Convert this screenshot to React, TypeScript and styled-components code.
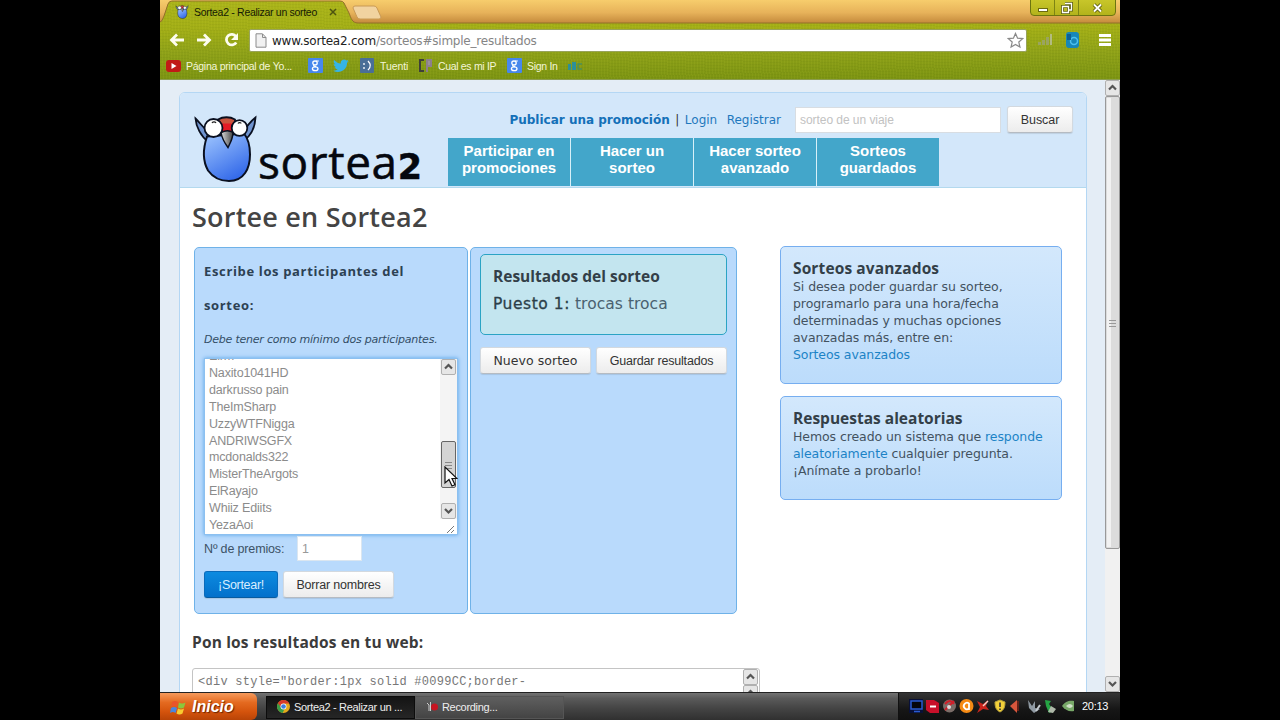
import React from 'react';
import styled, { createGlobalStyle, css } from 'styled-components';

const Global = createGlobalStyle`
  * { box-sizing: border-box; }
  html, body { margin: 0; background: #000; overflow: hidden; }
`;

const sans = '"Liberation Sans", Arial, sans-serif';
const verdana = '"DejaVu Sans", Verdana, sans-serif';
const treb = '"Open Sans", "Trebuchet MS", sans-serif';

const Stage = styled.div`
  width: 1280px; height: 720px; background: #000; display: flex; justify-content: center; overflow: hidden;
`;
const Screen = styled.div`
  width: 960px; height: 720px; display: flex; flex-direction: column; position: relative; white-space: nowrap;
`;

/* ---------- browser chrome ---------- */
const Chrome = styled.div`
  height: 80px; flex: none; display: flex; flex-direction: column;
  border-bottom: 1px solid #8b9d50;
  background:
    repeating-linear-gradient(87deg, rgba(255,255,90,.05) 0 1px, transparent 1px 3px),
    repeating-linear-gradient(3deg, rgba(50,70,0,.05) 0 1px, transparent 1px 3px),
    linear-gradient(#abb41a 0, #a2ae16 28px, #8ea118 52px, #7c9412 78px);
`;
const TabStrip = styled.div`
  height: 25px; display: flex; align-items: flex-start; position: relative;
`;
const StripArt = styled.svg` position: absolute; left: 0; top: 0; `;
const Tab = styled.div`
  position: relative; display: flex; align-items: center; height: 24px; padding-left: 15px; width: 190px;
  font: 10.5px ${sans}; color: #151a04;
`;
const TabTitle = styled.span` width: 124px; margin-left: 5px; letter-spacing: -0.3px; `;
const TabClose = styled.svg` margin-left: 11px; `;
const WinButtons = styled.div`
  position: absolute; right: 4px; top: -2px; display: flex; height: 18px; width: 86px;
  border: 1px solid #6d7410; border-radius: 0 0 4px 4px; background: linear-gradient(#c9c72b, #b3b31b);
`;
const WinButton = styled.div<{ $w: number }>`
  width: ${p => p.$w}px; display: flex; align-items: center; justify-content: center; padding-top: 1px;
  & + & { border-left: 1px solid #7d8414; }
`;
const Toolbar = styled.div`
  height: 30px; display: flex; align-items: center; padding: 0 8px 0 8px; 
`;
const NavIcons = styled.svg` width: 80px; height: 24px; flex: none; `;
const Address = styled.div`
  width: 779px; height: 23px; margin-left: 1px; background: #fff; border: 1px solid #98a35a; border-radius: 2px;
  display: flex; align-items: center; padding: 0 2px 0 5px; font: 13px ${verdana}; color: #222;
  em { font-style: normal; color: #858585; }
`;
const Url = styled.span` flex: 1; margin: 1px 0 0 5px; font-size: 12px; letter-spacing: -0.22px; `;
const ToolIcons = styled.svg` margin-left: 9px; flex: none; `;
const Bookmarks = styled.div`
  height: 24px; padding: 2px 0 0 6px; display: flex; align-items: flex-start;
  font: 10.5px ${sans}; color: #f4f6d8; 
`;
const Bookmark = styled.div<{ $w: number; $ls?: number }>`
  width: ${p => p.$w}px; display: flex; align-items: center; gap: 5px; height: 17px; flex: none;
  letter-spacing: ${p => p.$ls ?? 0}px;
`;

/* ---------- page ---------- */
const Viewport = styled.div`
  height: 612px; flex: none; display: flex; background: #e4edf6; overflow: hidden;
`;
const PageArea = styled.div` width: 945px; padding: 12px 19px 0 19px; `;
const Sheet = styled.div`
  width: 908px; height: 640px; border: 1px solid #b4d7f4; border-radius: 6px 6px 0 0; background: #fff; overflow: hidden;
`;
const Header = styled.div`
  height: 95px; background: #d3e7fa; border-bottom: 1px solid #b3d9ee; display: flex; padding: 0 13px 0 14px;
`;
const Logo = styled.div` width: 254px; display: flex; padding-top: 21px; `;
const Wordmark = styled.div`
  font: 46px/50px ${treb}; color: #05080f; margin: 22px 0 0 1px; letter-spacing: 0.6px; display: flex; align-items: baseline;
  -webkit-text-stroke: 0.5px #05080f;
  b { font: bold 35px/40px ${verdana}; letter-spacing: 0; }
`;
const HeaderRight = styled.div` flex: 1; display: flex; flex-direction: column; `;
const TopLinks = styled.div`
  height: 45px; display: flex; align-items: flex-end; justify-content: flex-end; padding-bottom: 5px; color: #1f78bd;
  font: 12px/26px ${verdana};
  b { color: #1470b8; }
`;
const Bar = styled.span` color: #333; margin: 0 5.5px 0 5.5px; `;
const RegisterLink = styled.span` margin-left: 9.5px; `;
const control = css` background: #fff; border: 1px solid #d8dde2; `;
const Search = styled.div`
  ${control} width: 206px; height: 26px; margin: 0 6px 0 14px; padding-left: 4px; font: 12px/24px ${sans}; color: #c2c2c2;
  letter-spacing: -0.05px;
`;
const Button = styled.div<{ $w: number; $ls?: number; $primary?: boolean; $font?: string }>`
  width: ${p => p.$w}px; height: 27px; flex: none; text-align: center; border-radius: 3px;
  font: 12.5px/26px ${p => p.$font ?? sans}; letter-spacing: ${p => p.$ls ?? -0.2}px;
  color: ${p => (p.$primary ? '#d8eeff' : '#333')};
  border: 1px solid ${p => (p.$primary ? '#0a6bbb' : '#d3d9df')};
  border-bottom-color: ${p => (p.$primary ? '#075b9f' : '#b5bbc2')};
  background: ${p => (p.$primary ? 'linear-gradient(#0c8be0, #0370cb)' : 'linear-gradient(#fff, #ececec)')};
  box-shadow: 0 1px 1px rgba(0,0,0,.1);
`;
const Menu = styled.div` display: flex; gap: 1px; background: #d8f0f8; width: 491px; `;
const MenuItem = styled.div`
  width: 122px; height: 48px; background: #43a6ca; color: #fff; text-align: center; padding-top: 4px;
  font: bold 15px/17px ${sans};
`;
const Title = styled.h1`
  font: 600 27px/36px ${treb}; color: #444; margin: 0; padding: 11px 0 0 12px; letter-spacing: 0.22px;
`;
const Columns = styled.div` display: flex; padding: 11px 0 0 14px; align-items: flex-start; `;
const Panel = styled.div<{ $w: number }>`
  width: ${p => p.$w}px; height: 367px; border: 1px solid #6fb2e8; border-radius: 5px; background: #b9dafc;
  padding: 6px 9px 0; margin: 1px 2px 0 0; color: #2b4358;
`;
const FormHead = styled.div` font: bold 13px/34px ${treb}; letter-spacing: 0.65px; color: #2d4153; `;
const Hint = styled.div` font: italic 11px/34px ${verdana}; letter-spacing: -0.22px; color: #334e66; padding-top: 1px; `;
const TextArea = styled.div`
  height: 177px; width: 254px; margin-top: 1px; background: #fff; border: 1px solid #8cc0f0; box-shadow: 0 0 4px #5aa5e8;
  display: flex; justify-content: space-between; overflow: hidden;
`;
const Names = styled.div`
  padding-left: 4px; margin-top: -11px; font: 12.5px/16.9px ${sans}; letter-spacing: -0.17px; color: #8b8b8b;
`;
const AreaScroll = styled.svg` flex: none; `;
const PrizeRow = styled.div`
  display: flex; font: 12.5px/26px ${sans}; letter-spacing: -0.15px; color: #3c5266; margin-top: 1px;
`;
const PrizeLabel = styled.span` width: 93px; `;
const PrizeInput = styled.div`
  width: 65px; height: 25px; background: #fff; border: 1px solid #dbe6f0; padding-left: 4px; line-height: 24px; color: #999;
`;
const Row = styled.div<{ $mt: number; $gap: number }>` display: flex; margin-top: ${p => p.$mt}px; gap: ${p => p.$gap}px; `;
const Result = styled.div`
  height: 81px; width: 247px; border: 1px solid #2ba3c4; border-radius: 5px; background: #c3e5ef; padding: 8px 12px;
`;
const BoxTitle = styled.div<{ $ls?: number }>`
  font: bold 15.5px/26px ${treb}; color: #333f48; letter-spacing: ${p => p.$ls ?? 0}px;
`;
const Place = styled.div`
  font: 15.5px/28px ${verdana}; color: #4a6170; margin-top: 1px; letter-spacing: 0.04px;
  span { color: #2c3f4a; letter-spacing: 0.55px; -webkit-text-stroke: 0.3px #2c3f4a; }
`;
const Side = styled.div` margin-left: 41px; display: flex; flex-direction: column; gap: 12px; `;
const SideBox = styled.div<{ $h: number }>`
  width: 282px; height: ${p => p.$h}px; border: 1px solid #76aef0; border-radius: 5px;
  background: linear-gradient(#d3e8fc, #bcdcfb); padding: 11px 12px; color: #43525f; 
  font: 12.5px/16.9px ${verdana}; letter-spacing: -0.08px;
  a { color: #1c83c6; }
`;
const SideTitle = styled(BoxTitle)` line-height: 21px; `;
const WebHead = styled.div`
  font: bold 15.5px/24px ${treb}; color: #3b3b3b; padding: 16px 0 0 12px; letter-spacing: 0.16px;
`;
const CodeBox = styled.div`
  margin: 14px 0 0 12px; width: 568px; height: 60px; border: 1px solid #c4c4c4; border-radius: 3px; display: flex;
  justify-content: space-between; font: 12px/26px "Liberation Mono", monospace; letter-spacing: 0.26px; color: #777;
  padding-left: 5px;
`;
const PageScroll = styled.svg` flex: none; `;

/* ---------- taskbar ---------- */
const Taskbar = styled.div`
  height: 28px; display: flex; border-top: 1px solid #222;
  background: linear-gradient(#727272, #5a5a5a 20%, #454545 55%, #303030);
  color: #fff; font: 11px/26px ${sans};
`;
const Start = styled.div`
  width: 97px; display: flex; align-items: center; padding-left: 10px; gap: 5px; border-radius: 0 6px 6px 0;
  background: linear-gradient(#f59a5c, #e46a20 35%, #d4530c 70%, #b84407);
  font: italic bold 16px/26px ${sans}; text-shadow: 1px 1px 1px #6b2500; margin-right: 9px;
`;
const Task = styled.div<{ $active?: boolean; $w: number }>`
  width: ${p => p.$w}px; margin: 3px 0 1px; display: flex; align-items: center; gap: 4px; padding: 0 0 2px 10px;
  line-height: 20px; color: #eee; letter-spacing: -0.32px;
  background: ${p => (p.$active ? 'linear-gradient(#141414, #262626)' : 'linear-gradient(#5f5f5f, #444)')};
  border: 1px solid ${p => (p.$active ? '#0c0c0c' : '#555')};
`;
const Tray = styled.div`
  margin-left: auto; width: 222px; background: linear-gradient(#343434, #161616 60%, #101010);
  border-left: 1px solid #111; display: flex; align-items: center; padding: 0 0 1px 10px; gap: 5px; letter-spacing: -0.3px;
`;
const Cursor = styled.svg` position: absolute; left: 284px; top: 466px; `;

const Bird = ({ w, h }: { w: number; h: number }) => (
  <svg width={w} height={h} viewBox="0 0 63 69">
    <defs>
      <linearGradient id="body" x1="0.2" y1="0.1" x2="0.7" y2="1">
        <stop offset="0" stopColor="#8fb8fb" /><stop offset="1" stopColor="#2f66e8" />
      </linearGradient>
      <linearGradient id="beak"><stop offset="0" stopColor="#ddd" /><stop offset="1" stopColor="#444" /></linearGradient>
    </defs>
    <path d="M14 27C7 22 2 12 1.500 4c4 4 8 9 13 14zM50 26c7-5 11-14 11.500-23-5 4-9 9-12 15z" fill="#6f93cf" stroke="#0a1020" strokeWidth="1.800" />
    <path d="M13 22C9 34 9 47 14 56C19 63 26 66.500 35 66.500C50 66.500 56 54 56 40C56 32 54 24 50 19z" fill="url(#body)" stroke="#0a1020" strokeWidth="2" />
    <path d="M24 5c5-3 12-3 17 0v14H25z" fill="#c9553f" stroke="#0a1020" strokeWidth="1.800" />
    <path d="M28 9h11v8H28z" fill="#e31a26" />
    <path d="M27 18c4-2 9-2 12 0 0 6-3 11-5 15-3-4-6-9-7-15z" fill="url(#beak)" stroke="#0a1020" strokeWidth="1.500" />
    <circle cx="19.500" cy="13.500" r="9" fill="#fff" stroke="#0a1020" strokeWidth="1.800" />
    <circle cx="45.500" cy="13.500" r="7.800" fill="#fff" stroke="#0a1020" strokeWidth="1.800" />
    <path d="M18 8.500c1-1.500 3-1.500 4 0M44 9c1-1.500 3-1 3 0" fill="none" stroke="#222" strokeWidth="1.300" />
  </svg>
);

const GoogleG = () => (
  <svg width="15" height="15" viewBox="0 0 15 15">
    <rect width="15" height="15" rx="1" fill="#4787ec" />
    <ellipse cx="7" cy="5" rx="2.200" ry="2" fill="none" stroke="#fff" strokeWidth="1.300" />
    <path d="M8 3h2.800M6 7C5 8 6.500 8.300 8 8.800" fill="none" stroke="#fff" strokeWidth="1.200" />
    <ellipse cx="7.200" cy="10.700" rx="2.800" ry="1.900" fill="none" stroke="#fff" strokeWidth="1.300" />
  </svg>
);

const ScrollButton = ({ x, y, down, h = 15 }: { x: number; y: number; down?: boolean; h?: number }) => (
  <g transform={`translate(${x} ${y})`}>
    <rect x=".5" y=".5" width="14" height={h} rx="1.500" fill="#e6e6e6" stroke="#b0b0b0" />
    <path d={down ? 'M4 6l3.500 3.500L11 6' : 'M4 9.500L7.500 6 11 9.500'} fill="none" stroke="#555" strokeWidth="2.200" />
  </g>
);

const names = ['Elrm', 'Naxito1041HD', 'darkrusso pain', 'TheImSharp', 'UzzyWTFNigga', 'ANDRIWSGFX', 'mcdonalds322',
  'MisterTheArgots', 'ElRayajo', 'Whiiz Ediits', 'YezaAoi'];

export default function App() {
  return (
    <Stage>
      <Global />
      <Screen>
        <Chrome>
          <TabStrip>
            <StripArt width="960" height="25">
              <defs>
                <linearGradient id="gold" x1="0" y1="0" x2="0" y2="1">
                  <stop offset="0" stopColor="#f7cd6c" /><stop offset=".55" stopColor="#e7b25a" /><stop offset="1" stopColor="#c48a3c" />
                </linearGradient>
              </defs>
              <path d="M0 0H960V23H198C192 23 191 18 189 13L184 3Q183 1 180 1H12Q9 1 8 4L4 16Q2 22 0 22z" fill="url(#gold)" />
              <path d="M960 23H198C192 23 191 18 189 13L184 3Q183 1 180 1H12Q9 1 8 4L4 16Q2 22 0 22" fill="none" stroke="#94702a" />
              <path d="M195 6h19q2 0 3 2l4 9q0 2-2 2h-19q-2 0-3-2l-4-9q0-2 2-2z" fill="#f1d3a0" stroke="#c99a55" />
            </StripArt>
            <Tab>
              <Bird w={14} h={14} />
              <TabTitle>Sortea2 - Realizar un sorteo</TabTitle>
              <TabClose width="8" height="8"><path d="M1 1l6 6M7 1L1 7" stroke="#4d5310" strokeWidth="1.500" /></TabClose>
            </Tab>
            <WinButtons>
              <WinButton $w={23}><svg width="12" height="10"><rect x="1.500" y="5.500" width="9" height="3" fill="#fff" stroke="#6b6b10" /></svg></WinButton>
              <WinButton $w={24}>
                <svg width="12" height="12"><path d="M4 1.500h6.500V8H8M1.500 4.500h6v6h-6z" fill="none" stroke="#5f6010" strokeWidth="3" /><path d="M4 1.500h6.500V8H8M1.500 4.500h6v6h-6z" fill="none" stroke="#fff" strokeWidth="1.300" /></svg>
              </WinButton>
              <WinButton $w={37}>
                <svg width="11" height="10"><path d="M2 1.500l7 7M9 1.500l-7 7" stroke="#5f6010" strokeWidth="3.800" /><path d="M2 1.500l7 7M9 1.500l-7 7" stroke="#fff" strokeWidth="1.800" /></svg>
              </WinButton>
            </WinButtons>
          </TabStrip>
          <Toolbar>
            <NavIcons viewBox="0 0 80 24">
              <g fill="none" stroke="#fdfdf0" strokeWidth="2.800">
                <path d="M16 12H4M9 6.500L3.500 12 9 17.500" />
                <path d="M29 12h12M36 6.500L41.500 12 36 17.500" />
                <path d="M68 8.500A5.300 5.300 0 1 0 68.200 14.500" />
              </g>
              <path d="M70 5v7h-7z" fill="#fdfdf0" />
            </NavIcons>
            <Address>
              <svg width="12" height="15"><path d="M1 .8h6.500L11 4.500v9.700H1z" fill="#f1f1f1" stroke="#8c8c8c" /><path d="M7.500 1v3.500H11" fill="none" stroke="#8c8c8c" /></svg>
              <Url>www.sortea2.com<em>/sorteos#simple_resultados</em></Url>
              <svg width="17" height="17" viewBox="0 0 18 18"><path d="M9 1.500l2.200 5 5.400.5-4.100 3.600 1.200 5.400L9 13.200 4.300 16l1.200-5.400L1.400 7l5.400-.5z" fill="#fff" stroke="#8a8a8a" strokeWidth="1.300" /></svg>
            </Address>
            <ToolIcons width="76" height="20">
              <path d="M2 15v-3h3v3zM6 15v-5h3v5zM10 15V7h3v8z" fill="#9aa460" /><path d="M14 15V4h2v11z" fill="#b3bb80" />
              <rect x="30" y="2" width="13" height="16" rx="3" fill="#1787b8" /><circle cx="38" cy="11" r="3.500" fill="none" stroke="#4cc0ee" strokeWidth="1.500" /><path d="M31 4h4v6h-4z" fill="#0d5f93" />
              <path d="M63 5.500h12M63 10h12M63 14.500h12" stroke="#fff" strokeWidth="2.800" />
            </ToolIcons>
          </Toolbar>
          <Bookmarks>
            <Bookmark $w={142} $ls={-0.27}>
              <svg width="15" height="12"><rect width="15" height="12" rx="3" fill="#c11a16" /><path d="M5.500 3l5 3-5 3z" fill="#fff" /></svg>
              Página principal de Yo...
            </Bookmark>
            <Bookmark $w={25}><GoogleG /></Bookmark>
            <Bookmark $w={27}>
              <svg width="16" height="14" viewBox="0 0 24 20"><path d="M23.500 2.500c-.8.400-1.700.7-2.700.8 1-.6 1.700-1.500 2.100-2.600-1 .6-2 1-3 1.200A4.800 4.800 0 0 0 11.700 6.200C7.700 6 4.200 4 1.800 1 .5 3.200 1.200 6 3.300 7.500c-.8 0-1.500-.3-2.200-.6 0 2.300 1.700 4.300 3.900 4.700-.7.200-1.400.2-2.200.1.600 1.900 2.400 3.300 4.500 3.300C5.200 16.600 2.800 17.300.3 17 9 22 21.200 17 21.100 5c1-.7 1.800-1.500 2.400-2.500z" fill="#35b4e6" /></svg>
            </Bookmark>
            <Bookmark $w={58} $ls={-0.1}>
              <svg width="15" height="15"><rect width="14" height="15" rx="1" fill="#4a6f97" /><path d="M4 5v2M4 9v2M8 3c3 3 3 6 0 9" fill="none" stroke="#fff" strokeWidth="1.300" /></svg>
              Tuenti
            </Bookmark>
            <Bookmark $w={89} $ls={-0.33}>
              <svg width="15" height="15"><path d="M6 2H2v11h4" fill="none" stroke="#3f3f38" strokeWidth="2" /><path d="M9 14V2h4v6H9" fill="#9a8f9a" stroke="#8d7f8d" strokeWidth="2" /></svg>
              Cual es mi IP
            </Bookmark>
            <Bookmark $w={61} $ls={-0.3}><GoogleG />Sign In</Bookmark>
            <Bookmark $w={20}>
              <svg width="16" height="12"><path d="M0 4h3v6H0zM4 2h4v8H4z" fill="#2d8f98" /><path d="M14 4h-4v5h4" fill="none" stroke="#4c8f5a" strokeWidth="1.500" /></svg>
            </Bookmark>
          </Bookmarks>
        </Chrome>

        <Viewport>
          <PageArea>
            <Sheet>
              <Header>
                <Logo><Bird w={63} h={70} /><Wordmark>sortea<b>2</b></Wordmark></Logo>
                <HeaderRight>
                  <TopLinks>
                    <b>Publicar una promoción</b><Bar>|</Bar><span>Login</span><RegisterLink>Registrar</RegisterLink>
                    <Search>sorteo de un viaje</Search>
                    <Button $w={66} $ls={-0.05}>Buscar</Button>
                  </TopLinks>
                  <Menu>
                    <MenuItem>Participar en<br />promociones</MenuItem>
                    <MenuItem>Hacer un<br />sorteo</MenuItem>
                    <MenuItem>Hacer sorteo<br />avanzado</MenuItem>
                    <MenuItem>Sorteos<br />guardados</MenuItem>
                  </Menu>
                </HeaderRight>
              </Header>
              <Title>Sortee en Sortea2</Title>
              <Columns>
                <Panel $w={274}>
                  <FormHead>Escribe los participantes del<br />sorteo:</FormHead>
                  <Hint>Debe tener como mínimo dos participantes.</Hint>
                  <TextArea>
                    <Names>{names.map(n => <div key={n}>{n}</div>)}</Names>
                    <AreaScroll width="17" height="175">
                      <rect width="17" height="175" fill="#f4f4f4" />
                      <ScrollButton x={1} y={0} />
                      <rect x="1.500" y="82.500" width="14" height="46" rx="1.500" fill="#d4d4d4" stroke="#666" />
                      <path d="M5 103.500h7M5 106.500h7M5 109.500h7" stroke="#888" />
                      <ScrollButton x={1} y={144} down />
                      <rect y="160" width="17" height="15" fill="#fff" />
                      <path d="M7 174l7-7M11 174l3-3" stroke="#777" />
                    </AreaScroll>
                  </TextArea>
                  <PrizeRow><PrizeLabel>Nº de premios:</PrizeLabel><PrizeInput>1</PrizeInput></PrizeRow>
                  <Row $mt={9} $gap={5}>
                    <Button $w={74} $primary $ls={-0.3}>¡Sortear!</Button>
                    <Button $w={111}>Borrar nombres</Button>
                  </Row>
                </Panel>
                <Panel $w={267}>
                  <Result>
                    <BoxTitle>Resultados del sorteo</BoxTitle>
                    <Place><span>Puesto 1:</span> trocas troca</Place>
                  </Result>
                  <Row $mt={12} $gap={5}>
                    <Button $w={111} $font={verdana} $ls={0.05}>Nuevo sorteo</Button>
                    <Button $w={131}>Guardar resultados</Button>
                  </Row>
                </Panel>
                <Side>
                  <SideBox $h={138}>
                    <SideTitle $ls={0.12}>Sorteos avanzados</SideTitle>
                    Si desea poder guardar su sorteo,<br />programarlo para una hora/fecha<br />determinadas y muchas opciones<br />
                    avanzadas más, entre en:<br /><a>Sorteos avanzados</a>
                  </SideBox>
                  <SideBox $h={104}>
                    <SideTitle>Respuestas aleatorias</SideTitle>
                    Hemos creado un sistema que <a>responde</a><br /><a>aleatoriamente</a> cualquier pregunta.<br />¡Anímate a probarlo!
                  </SideBox>
                </Side>
              </Columns>
              <WebHead>Pon los resultados en tu web:</WebHead>
              <CodeBox>
                &lt;div style="border:1px solid #0099CC;border-
                <svg width="16" height="58"><ScrollButton x={0} y={0} /><ScrollButton x={0} y={16} h={40} /></svg>
              </CodeBox>
            </Sheet>
          </PageArea>
          <PageScroll width="15" height="612">
            <rect width="15" height="612" fill="#f1f1f1" />
            <ScrollButton x={0} y={0} />
            <rect x=".5" y="16.500" width="14" height="452" rx="1.500" fill="#dcdcdc" stroke="#999" />
            <rect x="2" y="18" width="4" height="449" fill="#f2f2f2" />
            <path d="M4 240.500h7M4 243.500h7M4 246.500h7" stroke="#999" />
            <ScrollButton x={0} y={596} down />
          </PageScroll>
        </Viewport>

        <Taskbar>
          <Start>
            <svg width="17" height="16" viewBox="0 0 17 16"><path d="M2 3q3-2 6 0L7 8Q4 6 1 8z" fill="#e8552b" /><path d="M9 3.500q3 2 6.500 0L14 8.500q-3 2-6 0z" fill="#8cc63c" /><path d="M1 9q3-2 6 0l-1.500 5q-2.500-2-5.500 0z" fill="#4a86e0" /><path d="M8 9.500q3 2 6 0l-1.500 5q-3 2-6 0z" fill="#f8cc30" /></svg>
            Inicio
          </Start>
          <Task $active $w={149}>
            <svg width="13" height="13" viewBox="0 0 14 14"><circle cx="7" cy="7" r="7" fill="#e3a91c" /><path d="M1 3.500A7 7 0 0 1 13.200 3.800H7L4 8.500z" fill="#d8392b" /><path d="M1 3.500L5 9l3 1-2 4A7 7 0 0 1 1 3.500z" fill="#3a9c48" /><circle cx="7" cy="7" r="3.200" fill="#fff" /><circle cx="7" cy="7" r="2.500" fill="#3d7de0" /></svg>
            Sortea2 - Realizar un ...
          </Task>
          <Task $w={149}>
            <svg width="12" height="12"><path d="M1 2l2 2v6M4.500 1v9" stroke="#ccc" strokeWidth="1" fill="none" /><circle cx="8.500" cy="6" r="3.500" fill="#c71420" /></svg>
            Recording...
          </Task>
          <Tray>
            <svg width="168" height="18" viewBox="0 0 168 18">
              <rect x="0" y="2" width="14" height="14" fill="#081038" /><path d="M2 4h11v8H2zM5 14.500h6" fill="#05060c" stroke="#2a5bd0" strokeWidth="1.500" />
              <path d="M17 3h8l5 3v10h-9l-4-3z" fill="#c8102a" /><path d="M21 9.500h6" stroke="#fff" strokeWidth="2" />
              <circle cx="40.500" cy="9" r="6.500" fill="#7b6d68" /><path d="M36 13l9-9M36 7q5-6 9 0" stroke="#d01f2a" strokeWidth="2" fill="none" /><circle cx="40" cy="10" r="2" fill="#ddd" />
              <circle cx="57.500" cy="9" r="7" fill="#f58a14" /><path d="M60 6.500a3.200 3.200 0 1 0 0 5V6v7" fill="none" stroke="#fff" strokeWidth="1.800" />
              <path d="M68 4l6 3 5-4-2 6 3 4-6-1-6 4 3-6z" fill="#c9241c" /><path d="M74 9l5-5" stroke="#f3d0c8" strokeWidth="1.500" />
              <path d="M91 3l5 2c0 5-1 8-5 10-4-2-5-5-5-10z" fill="#f4d13a" stroke="#b9a43a" /><path d="M91 5.500v4.500M91 11.500v1.500" stroke="#333" strokeWidth="1.600" />
              <path d="M101 9l7-6v13z" fill="#d8563c" /><path d="M109 4v10" stroke="#7a2318" strokeWidth="1.500" />
              <path d="M119 3l4 6 3-5v7l5 1-6 4-5-5z" fill="#8f99a2" /><path d="M127 14l4-6" stroke="#c5cbd0" strokeWidth="2" />
              <path d="M136 3l6 1-2 3 5 7-5 2-3-7z" fill="#25a544" /><path d="M142 9l5 3-3 4-5-1z" fill="#aeb8a8" />
              <path d="M153 9c3-5 8-6 12-5v10c-5 1-9-1-12-5z" fill="#78a868" /><path d="M157 9q4-4 7 0-3 4-7 0z" fill="#d0e0c8" />
            </svg>
            <span>20:13</span>
          </Tray>
        </Taskbar>
        <Cursor width="14" height="22" viewBox="0 0 14 22"><path d="M1 1v16l4-3.500 3 6.500 3-1.300-3-6.200h5z" fill="#fff" stroke="#111" strokeWidth="1.200" /></Cursor>
      </Screen>
    </Stage>
  );
}
